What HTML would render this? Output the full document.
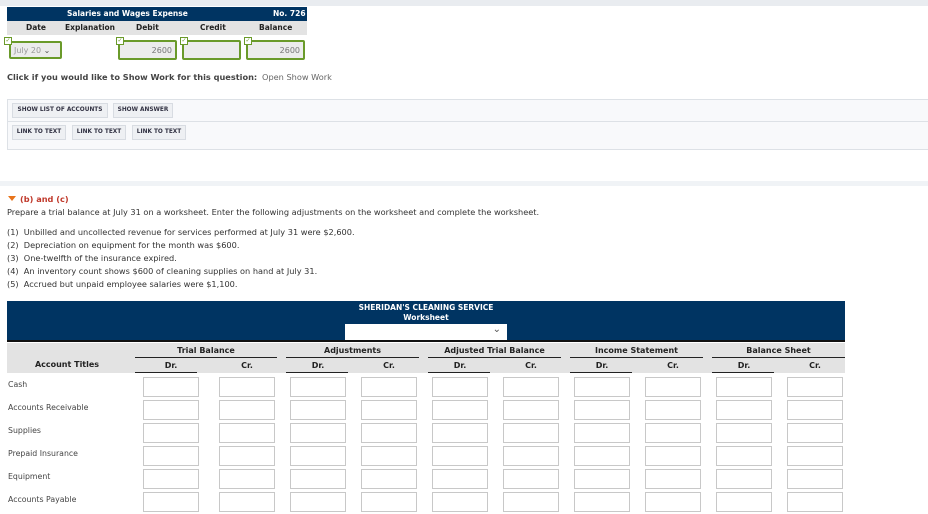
<!DOCTYPE html>
<html><head><meta charset="utf-8"><style>
*{margin:0;padding:0;box-sizing:border-box}
body{width:928px;height:514px;overflow:hidden;background:#fff;font-family:"DejaVu Sans","Liberation Sans",sans-serif;color:#333;position:relative;font-size:8px}
.a{position:absolute;white-space:nowrap}
.b{font-weight:bold}
.inp{position:absolute;border:1px solid #c8c8c8;background:#fff;width:56px;height:20px}
.gi{position:absolute;border:2px solid #6a9a2a;border-radius:2px;background:#ececec;height:20px;font-size:8px;color:#777;text-align:right;padding:4px 3px 0 0}
.chk{position:absolute;width:8px;height:8px;border:1px solid #6a9a2a;background:#fff;font-size:6px;color:#6a9a2a;line-height:6px;text-align:center}
.btn{position:absolute;background:#eef0f3;border:1px solid #d8dce2;font-size:5.8px;font-weight:bold;color:#334;padding:3px 0;height:15px;text-align:center;white-space:nowrap}
.hl{position:absolute;height:1px;background:#222}
</style></head><body>
<div class="a" style="left:0;top:0;width:928px;height:6px;background:#e9ecf0"></div>
<div class="a b" style="left:7px;top:7px;width:300px;height:14px;background:#003462;color:#fff;font-size:7.5px">
<span class="a" style="left:60px;top:2px">Salaries and Wages Expense</span><span class="a" style="left:266px;top:2px">No. 726</span></div>
<div class="a b" style="left:7px;top:21px;width:300px;height:14px;background:#e3e3e3;font-size:7.5px;color:#222">
<span class="a" style="left:19px;top:2px">Date</span><span class="a" style="left:58px;top:2px">Explanation</span><span class="a" style="left:129px;top:2px">Debit</span><span class="a" style="left:193px;top:2px">Credit</span><span class="a" style="left:252px;top:2px">Balance</span></div>
<div class="gi" style="left:9px;top:41px;width:53px;height:18px;text-align:left;padding:3px 0 0 3px;color:#999">July 20 <span style="color:#555;font-size:8px">&#8964;</span></div>
<div class="gi" style="left:118px;top:40px;width:59px">2600</div>
<div class="gi" style="left:182px;top:40px;width:59px"></div>
<div class="gi" style="left:246px;top:40px;width:59px">2600</div>
<div class="chk" style="left:4px;top:37px">✓</div><div class="chk" style="left:116px;top:37px">✓</div><div class="chk" style="left:180px;top:37px">✓</div><div class="chk" style="left:244px;top:37px">✓</div>
<div class="a b" style="left:7px;top:72px;color:#444;font-size:8.2px">Click if you would like to Show Work for this question:</div>
<div class="a" style="left:262px;top:72px;color:#666;font-size:8.2px">Open Show Work</div>
<div class="a" style="left:7px;top:99px;width:921px;height:51px;background:#f8f9fb;border:1px solid #dde1e6;border-right:none"></div>
<div class="a" style="left:8px;top:121px;width:920px;height:1px;background:#dde1e6"></div>
<div class="btn" style="left:12px;top:103px;width:96px">SHOW LIST OF ACCOUNTS</div>
<div class="btn" style="left:113px;top:103px;width:60px">SHOW ANSWER</div>
<div class="btn" style="left:12px;top:125px;width:54px">LINK TO TEXT</div>
<div class="btn" style="left:72px;top:125px;width:54px">LINK TO TEXT</div>
<div class="btn" style="left:132px;top:125px;width:54px">LINK TO TEXT</div>
<div class="a" style="left:0;top:181px;width:928px;height:5px;background:#f0f3f6"></div>
<div class="a" style="left:8px;top:196px;width:0;height:0;border-left:4px solid transparent;border-right:4px solid transparent;border-top:5px solid #e8731a"></div>
<div class="a b" style="left:20px;top:194px;color:#c0392b;font-size:8.2px">(b) and (c)</div>
<div class="a" style="left:7px;top:207px;font-size:8.2px">Prepare a trial balance at July 31 on a worksheet. Enter the following adjustments on the worksheet and complete the worksheet.</div>
<div class="a" style="left:7px;top:226px;font-size:8.2px;line-height:13px">(1)&nbsp; Unbilled and uncollected revenue for services performed at July 31 were $2,600.<br>(2)&nbsp; Depreciation on equipment for the month was $600.<br>(3)&nbsp; One-twelfth of the insurance expired.<br>(4)&nbsp; An inventory count shows $600 of cleaning supplies on hand at July 31.<br>(5)&nbsp; Accrued but unpaid employee salaries were $1,100.</div>
<div class="a" style="left:7px;top:301px;width:838px;height:41px;background:#003462;border-bottom:2px solid #111"></div>
<div class="a b" style="left:300px;top:303px;width:252px;text-align:center;color:#fff;font-size:7.5px;line-height:10px">SHERIDAN'S CLEANING SERVICE<br>Worksheet</div>
<div class="a" style="left:345px;top:324px;width:162px;height:16px;background:#fff"><span class="a" style="right:6px;top:0;color:#555;font-size:10px">&#8964;</span></div>
<div class="a" style="left:7px;top:343px;width:838px;height:30px;background:#e3e3e3"></div>
<div class="a b" style="left:7px;top:360px;width:120px;text-align:center;color:#222">Account Titles</div>
<div id="g"></div>
<script>
var groups=["Trial Balance","Adjustments","Adjusted Trial Balance","Income Statement","Balance Sheet"];
var gx=[135,286,428,570,712],gw=[142,133,133,133,133];
var dr=[143,290,432,574,716],cr=[219,361,503,645,787];
var h="";
var rows=["Cash","Accounts Receivable","Supplies","Prepaid Insurance","Equipment","Accounts Payable"];
for(var i=0;i<5;i++){var x=gx[i];
h+='<div class="a b" style="left:'+x+'px;top:346px;width:'+gw[i]+'px;text-align:center;color:#222">'+groups[i]+'</div>';
h+='<div class="hl" style="left:'+x+'px;top:357px;width:'+gw[i]+'px"></div>';
h+='<div class="hl" style="left:'+x+'px;top:372px;width:62px"></div>';
h+='<div class="a b" style="left:'+dr[i]+'px;top:361px;width:56px;text-align:center;color:#222">Dr.</div>';
h+='<div class="a b" style="left:'+cr[i]+'px;top:361px;width:56px;text-align:center;color:#222">Cr.</div>';
for(var r=0;r<6;r++){var y=377+r*23;
h+='<div class="inp" style="left:'+dr[i]+'px;top:'+y+'px"></div><div class="inp" style="left:'+cr[i]+'px;top:'+y+'px"></div>';}}
for(var r=0;r<6;r++)h+='<div class="a" style="left:8px;top:'+(380+r*23)+'px;color:#444;font-size:7.8px">'+rows[r]+'</div>';
document.getElementById("g").innerHTML=h;
</script>
</body></html>
